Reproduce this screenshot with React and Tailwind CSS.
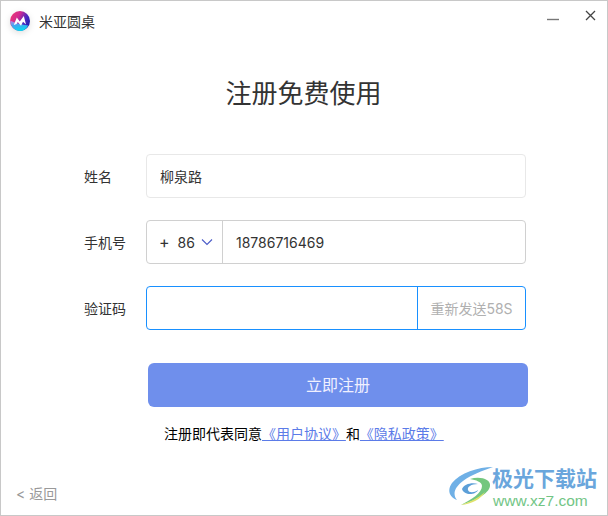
import React from "react";

function Logo() {
  return (
    <svg width="20" height="20" viewBox="0 0 20 20" className="shrink-0 drop-shadow-[0_2px_3px_rgba(0,0,0,0.12)]">
      <defs>
        <linearGradient id="lg2" x1="0.05" y1="0.1" x2="1" y2="0.55">
          <stop offset="0" stopColor="#ec3a74" />
          <stop offset="0.4" stopColor="#d02a92" />
          <stop offset="0.75" stopColor="#4a28c0" />
          <stop offset="1" stopColor="#2420b0" />
        </linearGradient>
        <linearGradient id="lg3" x1="0.2" y1="0" x2="0.5" y2="1">
          <stop offset="0" stopColor="#c080e0" />
          <stop offset="0.45" stopColor="#40a8f0" />
          <stop offset="1" stopColor="#06dcf0" />
        </linearGradient>
      </defs>
      <circle cx="10" cy="10" r="10" fill="url(#lg2)" />
      <path d="M0.1 9.5 C0.3 15.5 5 20 10 20 C13.5 20 16.5 18 18.2 14.5 C12 14 5 12 0.1 9.5 Z" fill="url(#lg3)" />
      <path d="M3.8 14 L6.8 6.5 L9.8 10.5 L13.8 5 L16 13.5 L13 10.8 L11 14.8 L7.8 11 L6.5 13 Z" fill="#fff" />
    </svg>
  );
}

function Watermark() {
  return (
    <div className="absolute left-[447px] top-[465px] w-[156px] h-[44px]">
      <svg width="46" height="40" viewBox="0 0 46 40" className="absolute left-0 top-0">
        <path d="M45 1 C30 1 12 7 4 17 C-1 24 1 31 9 34 C4 28 7 21 15 15 C23 9 34 5 45 1 Z" fill="#6fb0e6" />
        <path d="M14 23 C16 18 24 16 30 18 C23 18 19 21 20 24 C21 27 26 27 30 24 C28 29 16 30 14 23 Z" fill="#5c9fd8" />
        <path d="M22 13 C32 10 43 13 42 20 C41 28 26 35 13 39 C24 33 34 27 34 20 C34 16 28 14 22 13 Z" fill="#74c77f" />
        <path d="M13 39 C22 36 30 32 37 26 C33 33 24 38 13 39 Z" fill="#dfe26a" />
      </svg>
      <div className="absolute left-[44px] top-[-1px] text-[21px] leading-[24px] font-bold text-[#6aa6dc] whitespace-nowrap font-['Noto_Sans_CJK_SC',sans-serif]">
        极光下载站
      </div>
      <div className="absolute left-[45px] top-[26px] text-[15.5px] leading-[18px] text-[#72c585] whitespace-nowrap font-['Liberation_Sans',sans-serif]">
        www.xz7.com
      </div>
    </div>
  );
}

function Row({ label, children }) {
  return (
    <div className="flex items-center h-[44px]">
      <div className="w-[62px] text-[14px] text-[#333]">{label}</div>
      {children}
    </div>
  );
}

export default function App() {
  return (
    <div className="relative w-[608px] h-[516px] bg-white border border-[#c8c8c8] overflow-hidden font-['Inter','Noto_Sans_CJK_SC',sans-serif]">
      <div className="flex items-center h-[40px] pl-[9px]">
        <Logo />
        <span className="ml-[9px] text-[14px] text-[#333]">米亚圆桌</span>
        <div className="ml-auto flex items-start h-full pt-[9px] pr-[11px] gap-[26px]">
          <svg width="12" height="12" viewBox="0 0 12 12"><path d="M0 9.5H12" stroke="#777" strokeWidth="1.4" /></svg>
          <svg width="11" height="11" viewBox="0 0 11 11"><path d="M1 1L10 10M10 1L1 10" stroke="#444" strokeWidth="1.3" /></svg>
        </div>
      </div>

      <h1 className="text-center text-[26px] leading-[36px] text-[#333] mt-[35px] ml-[-1px]">注册免费使用</h1>

      <div className="flex flex-col gap-[22px] mt-[42px] pl-[83px]">
        <Row label="姓名">
          <div className="flex items-center w-[380px] h-[44px] border border-[#e8e8e8] rounded-[4px] pl-[13px] text-[14px] text-[#333]">
            柳泉路
          </div>
        </Row>
        <Row label="手机号">
          <div className="flex items-center w-[380px] h-[44px] border border-[#d0d0d0] rounded-[4px] text-[14px] text-[#333]">
            <div className="flex items-center w-[76px] h-full border-r border-[#d0d0d0] pl-[12px] shrink-0">
              <span className="text-[16px]">+</span>
              <span className="ml-[8px]">86</span>
              <svg width="12" height="8" viewBox="0 0 12 8" className="ml-[6px]"><path d="M1 1.5L6 6.5L11 1.5" fill="none" stroke="#4a5bc8" strokeWidth="1.1" /></svg>
            </div>
            <span className="pl-[13px]">18786716469</span>
          </div>
        </Row>
        <Row label="验证码">
          <div className="flex items-center w-[380px] h-[44px] border border-[#1890ff] rounded-[4px] text-[14px]">
            <div className="flex-1" />
            <div className="flex items-center justify-center w-[108px] h-full border-l border-[#1890ff] text-[#b0b0b0] shrink-0">
              重新发送58S
            </div>
          </div>
        </Row>
      </div>

      <button className="block ml-[147px] mt-[33px] w-[380px] h-[44px] rounded-[6px] bg-[#6f8fec] text-[16px] text-[#f0f0ff]">
        立即注册
      </button>

      <p className="ml-[163px] mt-[17px] text-[14px] leading-[20px] text-black whitespace-nowrap">
        注册即代表同意<span className="text-[#5b7be8] underline [word-spacing:-4px]">{"\u00a0《用户协议》\u00a0"}</span>和<span className="text-[#5b7be8] underline [word-spacing:-4px]">{"\u00a0《隐私政策》\u00a0"}</span>
      </p>

      <div className="absolute left-[15px] top-[484px] text-[14px] leading-[18px] text-[#999]">&lt; 返回</div>
      <Watermark />
    </div>
  );
}
